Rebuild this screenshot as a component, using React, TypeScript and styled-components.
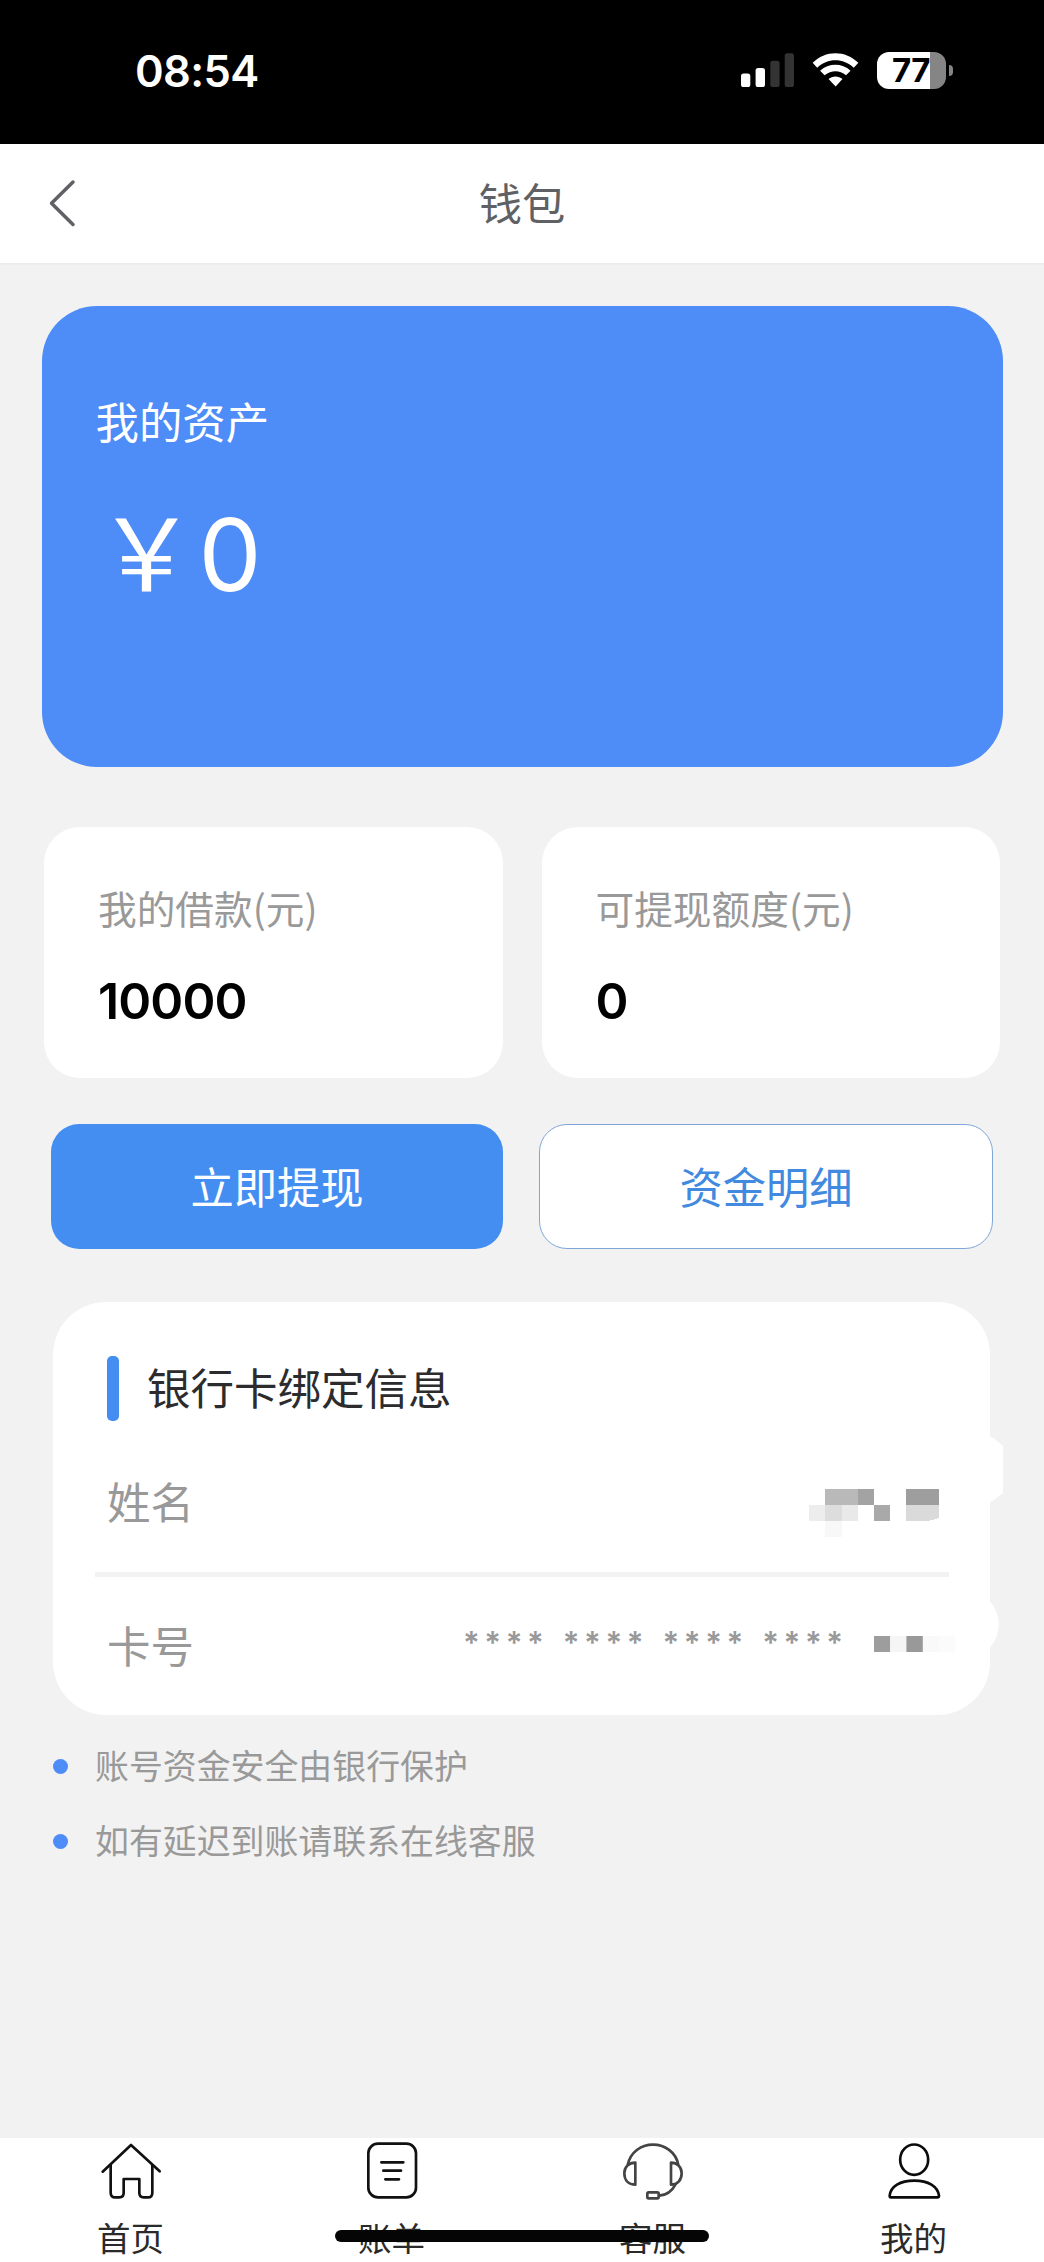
import React from "react";
import styled, { createGlobalStyle } from "styled-components";

const GlobalStyle = createGlobalStyle`
  * { box-sizing: border-box; }
  body { margin: 0; background: #f2f2f2; }
`;

const Screen = styled.div`
  position: relative;
  width: 1044px;
  height: 2262px;
  display: flex;
  flex-direction: column;
  overflow: hidden;
  background: #f2f2f2;
  font-family: Inter, "Noto Sans CJK SC", sans-serif;
`;

const StatusBar = styled.header`
  height: 143.5px;
  flex: none;
  display: flex;
  align-items: flex-start;
  justify-content: space-between;
  padding: 50px 91px 0 135px;
  background: #000;
`;

const Clock = styled.time`
  color: #fff;
  font-size: 43.5px;
  font-weight: 600;
  line-height: 43px;
  letter-spacing: -0.6px;
`;

const StatusIcons = styled.div`
  display: flex;
  align-items: flex-start;
`;

const Signal = styled.svg`
  width: 53px;
  height: 40px;
  margin-right: 18px;
`;

const Wifi = styled.svg`
  width: 47px;
  height: 40px;
  margin-right: 18px;
`;

const Battery = styled.div`
  display: flex;
  align-items: center;
  gap: 2.5px;
  margin-top: 2px;
`;

const BatteryBody = styled.div`
  width: 69px;
  height: 36.5px;
  border-radius: 12px;
  padding-left: 15px;
  background: linear-gradient(to right, #fff 53px, #858585 53px);
  color: #000;
  font-size: 33px;
  font-weight: 700;
  line-height: 37px;
  letter-spacing: -0.6px;
`;

const BatteryTip = styled.div`
  width: 4.5px;
  height: 11px;
  border-radius: 0 5px 5px 0;
  background: #858585;
`;

const NavBar = styled.nav`
  height: 121px;
  flex: none;
  display: grid;
  grid-template-columns: 120px 1fr 120px;
  background: #fff;
  border-bottom: 2px solid #ebedf0;
`;

const BackButton = styled.button`
  display: flex;
  align-items: center;
  border: 0;
  padding: 0 0 0 46px;
  background: none;
`;

const NavTitle = styled.h1`
  margin: 0;
  color: #606164;
  font-size: 43.3px;
  font-weight: 400;
  line-height: 120px;
  text-align: center;
`;

const Content = styled.main`
  flex: 1;
  padding: 41.5px 0 0;
`;

const AssetCard = styled.section`
  height: 460.5px;
  margin: 0 41.5px;
  padding: 87px 54px 0;
  border-radius: 55px;
  background: #4e8cf7;
  color: #fff;
`;

const AssetLabel = styled.div`
  font-size: 43.4px;
  line-height: 60px;
`;

const AssetAmount = styled.div`
  display: flex;
  gap: 2px;
  margin: 42px 0 0 1px;
  font-size: 100px;
  line-height: 120px;
`;

const StatRow = styled.div`
  display: flex;
  gap: 39px;
  margin: 60.5px 44px 0;
`;

const StatCard = styled.section`
  flex: 1;
  height: 250.5px;
  padding: 52.5px 0 0 54px;
  border-radius: 36px;
  background: #fff;
`;

const StatLabel = styled.div`
  color: #999;
  font-size: 38.7px;
  line-height: 54px;
  font-family: "Noto Sans CJK SC", sans-serif;
`;

const StatValue = styled.div`
  margin-top: 37px;
  color: #000;
  font-size: 50px;
  font-weight: 600;
  line-height: 60px;
  letter-spacing: -0.9px;
`;

const ActionRow = styled.div`
  display: flex;
  gap: 36px;
  margin: 46px 51px 0;
`;

const ActionButton = styled.button<{ $primary?: boolean }>`
  flex: 1;
  height: 125.5px;
  padding: 3px 0 0;
  border: ${(p) => (p.$primary ? "0" : "1px solid #7fa6d8")};
  border-radius: 28px;
  background: ${(p) => (p.$primary ? "#448ef2" : "#fff")};
  color: ${(p) => (p.$primary ? "#fff" : "#4289e0")};
  font-family: inherit;
  font-size: 43.3px;
  line-height: 60px;
`;

const BankCard = styled.section`
  position: relative;
  height: 413px;
  margin: 53px 54px 0 53px;
  padding: 54px 0 0;
  border-radius: 53px;
  background: #fff;
`;

const CardEdge = styled.svg`
  position: absolute;
  top: 130px;
  right: -14px;
  width: 14px;
  height: 220px;
`;

const BankTitle = styled.h2`
  display: flex;
  align-items: stretch;
  gap: 28px;
  height: 65px;
  margin: 0 0 0 54px;
  color: #2c2c2e;
  font-size: 43.5px;
  font-weight: 400;
  line-height: 67px;

  &::before {
    content: "";
    width: 12px;
    border-radius: 5px;
    background: #448ef2;
  }
`;

const InfoRow = styled.div<{ $height: number; $top: number }>`
  display: flex;
  align-items: center;
  justify-content: space-between;
  height: ${(p) => p.$height}px;
  padding-top: ${(p) => p.$top}px;
  margin-left: 54px;
`;

const InfoLabel = styled.span`
  color: #999;
  font-size: 43.5px;
  line-height: 60px;
`;

const InfoValue = styled.span`
  display: flex;
  align-items: center;
  margin-bottom: 6px;
  color: #999;
`;

const Digits = styled.span`
  display: flex;
  width: 399px;
  margin-right: 12px;
  padding-bottom: 1px;
  font-family: Inter, sans-serif;
  font-size: 31px;
  font-weight: 600;
  line-height: 40px;
`;

const StarGroup = styled.span`
  width: 99.9px;
  letter-spacing: 4.6px;
`;

const Divider = styled.hr`
  height: 4.5px;
  margin: 0 41px 0 42px;
  border: 0;
  background: #f2f2f2;
`;

const Mosaic = styled.svg<{ $right: number; $top?: number }>`
  display: block;
  margin-top: ${(p) => p.$top ?? 0}px;
  margin-right: ${(p) => p.$right}px;
`;

const Notes = styled.ul`
  margin: 14px 0 0;
  padding: 0 0 0 53px;
  list-style: none;
`;

const Note = styled.li`
  display: flex;
  align-items: center;
  gap: 27px;
  height: 75.3px;
  color: #999;
  font-size: 33.9px;
  line-height: 48px;

  &::before {
    content: "";
    width: 15px;
    height: 15px;
    border-radius: 50%;
    background: #4e8cf7;
  }
`;

const TabBar = styled.nav`
  height: 124.5px;
  flex: none;
  display: grid;
  grid-template-columns: repeat(4, 1fr);
  background: #fff;
`;

const Tab = styled.a`
  display: flex;
  flex-direction: column;
  align-items: center;
  padding-top: 3.5px;
  color: #2a2a2a;
  font-size: 33.5px;
  line-height: 48px;
  svg { width: 62px; height: 60px; margin-bottom: 14px; }
`;

const HomeIndicator = styled.div`
  position: absolute;
  left: 335px;
  bottom: 20px;
  width: 374px;
  height: 12px;
  border-radius: 6px;
  background: #050505;
`;

const nameCells: [number, number, number, number, string][] = [
  [16.2, 0, 32.6, 16.2, "#b9b9b9"],
  [48.8, 0, 16.2, 16.2, "#a3a3a3"],
  [97.3, 0, 32.5, 16.2, "#9e9e9e"],
  [0, 16.2, 16.2, 16.2, "#ededed"],
  [16.2, 16.2, 16.3, 16.2, "#dddddd"],
  [32.5, 16.2, 16.3, 16.2, "#e9e9e9"],
  [65, 16.2, 16.2, 16.2, "#a9a9a9"],
  [16.2, 32.4, 16.3, 16, "#f8f8f8"],
];

const cardCells: [number, number, number, number, string][] = [
  [0, 0, 16.2, 16.3, "#9d9d9d"],
  [16.2, 0, 16.2, 16.3, "#f5f5f5"],
  [32.4, 0, 16.5, 16.3, "#999999"],
  [48.9, 0, 16.2, 16.3, "#f9f9f9"],
  [65.1, 0, 16, 16.3, "#fbfbfb"],
];

const tabs = [
  {
    label: "首页",
    icon: (
      <svg viewBox="299 63 186 180" fill="none" stroke="#111" strokeWidth="8" strokeLinecap="round" strokeLinejoin="round">
        <path d="M307 155 L392 75 L478 154" />
        <path d="M331 135 V218 Q331 232 345 232 H357 Q370 232 370 219 V177 H417 V219 Q417 232 430 232 H443 Q456 232 456 218 V135" />
      </svg>
    ),
  },
  {
    label: "账单",
    icon: (
      <svg viewBox="1080 63 186 180" fill="none" stroke="#111" strokeWidth="8" strokeLinecap="round">
        <rect x="1102" y="71" width="143" height="161" rx="29" />
        <path d="M1141 127 H1207 M1147 152 H1200 M1153 178 H1194" />
      </svg>
    ),
  },
  {
    label: "客服",
    icon: (
      <svg viewBox="299 63 186 180" fill="none" stroke="#444" strokeWidth="8" strokeLinejoin="round">
        <path d="M316 135 C324 96 356 74 392 74 C428 74 462 97 468 135" />
        <path d="M339 128 V194 C319 194 306 181 306 160 C306 141 319 128 339 128 Z" />
        <path d="M446 128 V194 C465 194 478 181 478 160 C478 141 465 128 446 128 Z" />
        <path d="M461 191 C450 212 432 226 411 227" />
        <rect x="375" y="217" width="34" height="18" rx="4" />
      </svg>
    ),
  },
  {
    label: "我的",
    icon: (
      <svg viewBox="1080 63 186 180" fill="none" stroke="#0c0c0c" strokeWidth="8" strokeLinejoin="round">
        <ellipse cx="1173.500" cy="119" rx="42" ry="45.500" />
        <path d="M1104 232 Q1100 232 1100 227 C1103 199 1131 182 1174 182 C1216 182 1244 199 1248 227 Q1248 232 1243 232 Z" />
      </svg>
    ),
  },
];

export default function App() {
  return (
    <Screen>
      <GlobalStyle />
      <StatusBar>
        <Clock>08:54</Clock>
        <StatusIcons>
          <Signal viewBox="741 50 53 40">
            <rect x="741" y="73.500" width="9.300" height="13.500" rx="2.600" fill="#fff" />
            <rect x="755.600" y="68" width="9.400" height="19" rx="2.600" fill="#fff" />
            <rect x="770.300" y="60.700" width="9.300" height="26.300" rx="2.600" fill="#333" />
            <rect x="784.700" y="53.300" width="9.300" height="33.700" rx="2.600" fill="#333" />
          </Signal>
          <Wifi viewBox="868 150 145 120" fill="#fff">
            <path d="M870 188 C908 148 972 148 1011 188 L997 203 C965 172 915 172 884 203 Z" />
            <path d="M893 212 C920 188 960 188 987 212 L973 226 C953 210 928 210 907 226 Z" />
            <path d="M919 238 C931 227 950 227 962 238 L941 261 Z" />
          </Wifi>
          <Battery>
            <BatteryBody>77</BatteryBody>
            <BatteryTip />
          </Battery>
        </StatusIcons>
      </StatusBar>
      <NavBar>
        <BackButton aria-label="返回">
          <svg width="32" height="50" viewBox="46 178 32 50" fill="none" stroke="#606164" strokeWidth="3.500" strokeLinecap="round" strokeLinejoin="round">
            <path d="M73 181 L51.500 202.300 L73 223.500" />
          </svg>
        </BackButton>
        <NavTitle>钱包</NavTitle>
      </NavBar>
      <Content>
        <AssetCard>
          <AssetLabel>我的资产</AssetLabel>
          <AssetAmount>
            <span>￥</span>
            <span>0</span>
          </AssetAmount>
        </AssetCard>
        <StatRow>
          <StatCard>
            <StatLabel>我的借款(元)</StatLabel>
            <StatValue>10000</StatValue>
          </StatCard>
          <StatCard>
            <StatLabel>可提现额度(元)</StatLabel>
            <StatValue>0</StatValue>
          </StatCard>
        </StatRow>
        <ActionRow>
          <ActionButton $primary>立即提现</ActionButton>
          <ActionButton>资金明细</ActionButton>
        </ActionRow>
        <BankCard>
          <CardEdge viewBox="990 1432 14 220" fill="#fff">
            <path d="M989 1436 L994 1438.500 L1003 1446 V1493 L994 1500 L989 1503 Z" />
            <path d="M989 1600 Q998.700 1611 998.700 1624 Q998.700 1638 989 1649 Z" />
          </CardEdge>
          <BankTitle>银行卡绑定信息</BankTitle>
          <InfoRow $height={151} $top={13}>
            <InfoLabel>姓名</InfoLabel>
            <Mosaic $right={51} $top={21} width="130" height="49" viewBox="0 0 130 49" shapeRendering="crispEdges">
              {nameCells.map(([x, y, w, h, fill], i) => (
                <rect key={i} x={x} y={y} width={w} height={h} fill={fill} />
              ))}
              <path d="M97.300 16.200 H129.800 V29 Q121 32.400 112 32.400 H97.300 Z" fill="#dadada" />
            </Mosaic>
          </InfoRow>
          <Divider />
          <InfoRow $height={138} $top={2}>
            <InfoLabel>卡号</InfoLabel>
            <InfoValue>
              <Digits>
                {[0, 1, 2, 3].map((group) => (
                  <StarGroup key={group}>****</StarGroup>
                ))}
              </Digits>
              <Mosaic $right={35} width="81" height="16" viewBox="0 0 81 16">
                {cardCells.map(([x, y, w, h, fill], i) => (
                  <rect key={i} x={x} y={y} width={w} height={h} fill={fill} />
                ))}
              </Mosaic>
            </InfoValue>
          </InfoRow>
        </BankCard>
        <Notes>
          <Note>账号资金安全由银行保护</Note>
          <Note>如有延迟到账请联系在线客服</Note>
        </Notes>
      </Content>
      <TabBar>
        {tabs.map((tab) => (
          <Tab key={tab.label}>
            {tab.icon}
            {tab.label}
          </Tab>
        ))}
      </TabBar>
      <HomeIndicator />
    </Screen>
  );
}
